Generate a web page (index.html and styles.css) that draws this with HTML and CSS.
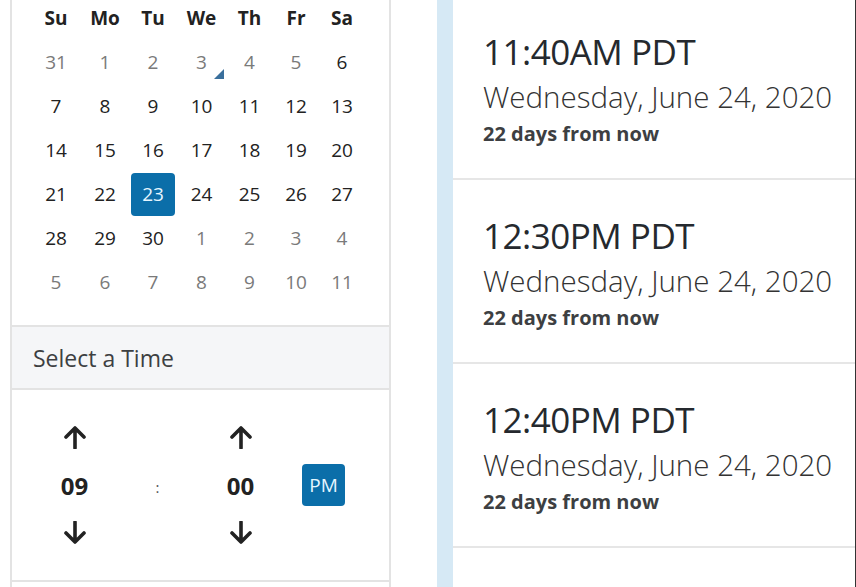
FILE: index.html
```html
<!DOCTYPE html>
<html>
<head>
<meta charset="utf-8">
<link rel="stylesheet" href="styles.css">
</head>
<body>
<div class="page">
  <div class="picker">
    <div class="cal">
      <div class="dow">Su</div><div class="dow">Mo</div><div class="dow">Tu</div><div class="dow">We</div><div class="dow">Th</div><div class="dow">Fr</div><div class="dow">Sa</div>
      <div class="d off">31</div><div class="d off">1</div><div class="d off">2</div><div class="d off today">3</div><div class="d off">4</div><div class="d off">5</div><div class="d">6</div>
      <div class="d">7</div><div class="d">8</div><div class="d">9</div><div class="d">10</div><div class="d">11</div><div class="d">12</div><div class="d">13</div>
      <div class="d">14</div><div class="d">15</div><div class="d">16</div><div class="d">17</div><div class="d">18</div><div class="d">19</div><div class="d">20</div>
      <div class="d">21</div><div class="d">22</div><div class="d"><span class="sel">23</span></div><div class="d">24</div><div class="d">25</div><div class="d">26</div><div class="d">27</div>
      <div class="d">28</div><div class="d">29</div><div class="d">30</div><div class="d off">1</div><div class="d off">2</div><div class="d off">3</div><div class="d off">4</div>
      <div class="d off">5</div><div class="d off">6</div><div class="d off">7</div><div class="d off">8</div><div class="d off">9</div><div class="d off">10</div><div class="d off">11</div>
    </div>
    <div class="time-head">Select a Time</div>
    <div class="time-body">
      <div class="tc"><svg class="arr" viewBox="0 0 24 24"><path d="M12 23V3M3 12L12 3L21 12"/></svg></div>
      <div class="tc"></div>
      <div class="tc"><svg class="arr" viewBox="0 0 24 24"><path d="M12 23V3M3 12L12 3L21 12"/></svg></div>
      <div class="tc"></div>
      <div class="tc num">09</div>
      <div class="tc colon">:</div>
      <div class="tc num">00</div>
      <div class="tc"><span class="pm">PM</span></div>
      <div class="tc"><svg class="arr" viewBox="0 0 24 24"><path d="M12 1V21M3 12L12 21L21 12"/></svg></div>
      <div class="tc"></div>
      <div class="tc"><svg class="arr" viewBox="0 0 24 24"><path d="M12 1V21M3 12L12 21L21 12"/></svg></div>
      <div class="tc"></div>
    </div>
    <div class="more"></div>
  </div>
  <div class="slots">
    <div class="slot">
      <div class="t">11:40AM PDT</div>
      <div class="date">Wednesday, June 24, 2020</div>
      <div class="rel">22 days from now</div>
    </div>
    <div class="slot">
      <div class="t">12:30PM PDT</div>
      <div class="date">Wednesday, June 24, 2020</div>
      <div class="rel">22 days from now</div>
    </div>
    <div class="slot">
      <div class="t">12:40PM PDT</div>
      <div class="date">Wednesday, June 24, 2020</div>
      <div class="rel">22 days from now</div>
    </div>
    <div class="slot"></div>
  </div>
</div>
</body>
</html>
```

FILE: styles.css
```css
html, body {
  margin: 0;
  padding: 0;
  background: #fff;
  overflow: hidden;
  height: 587px;
}
body {
  font-family: "Open Sans", "Noto Sans", sans-serif;
  color: #222;
}
.page {
  display: flex;
  align-items: flex-start;
  margin-top: -4px;
  padding-left: 10px;
}
.picker {
  width: 377px;
  border-left: 2px solid #e3e3e3;
  border-right: 2px solid #e3e3e3;
  flex: none;
}
.cal {
  display: grid;
  grid-template-columns: 50px 48px 48px 49px 47px 46px 46px;
  grid-auto-rows: 44px;
  padding: 0 24px 21px 19px;
  border-bottom: 2px solid #e3e3e3;
}
.dow {
  display: flex;
  align-items: center;
  justify-content: center;
  font-weight: 700;
  font-size: 19px;
  color: #222;
}
.d {
  display: flex;
  align-items: center;
  justify-content: center;
  font-size: 19px;
  color: #222;
  position: relative;
}
.d.off {
  color: #7a7a7a;
}
.d.today::after {
  content: "";
  position: absolute;
  right: 2px;
  bottom: 5px;
  border-left: 10px solid transparent;
  border-bottom: 10px solid #3a6f9c;
}
.sel {
  width: 44px;
  height: 43px;
  border-radius: 4px;
  background: #0b6ea9;
  color: #e6f6ff;
  display: flex;
  align-items: center;
  justify-content: center;
}
.time-head {
  height: 61px;
  background: #f5f6f8;
  border-bottom: 2px solid #e3e3e3;
  display: flex;
  align-items: center;
  padding-left: 21px;
  font-size: 23px;
  color: #3d3f42;
}
.time-body {
  display: grid;
  grid-template-columns: repeat(4, 83px);
  grid-auto-rows: 48px;
  padding: 23px 0 23px 21px;
  border-bottom: 2px solid #e3e3e3;
}
.tc {
  display: flex;
  align-items: center;
  justify-content: center;
}
.arr {
  width: 24px;
  height: 24px;
  fill: none;
  stroke: #222;
  stroke-width: 3.6;
  stroke-linecap: round;
  stroke-linejoin: round;
}
.num {
  font-weight: 700;
  font-size: 24px;
  color: #222;
}
.colon {
  font-size: 15px;
  color: #555;
  padding-top: 4px;
}
.pm {
  width: 43px;
  height: 42px;
  border-radius: 4px;
  background: #0b6ea9;
  color: #e6f6ff;
  font-size: 19px;
  display: flex;
  align-items: center;
  justify-content: center;
}
.more {
  height: 20px;
}
.slots {
  margin-left: 46px;
  flex: 1;
  border-left: 16px solid #d6e9f5;
  border-right: 1px solid #333;
  height: 800px;
}
.slot {
  height: 182px;
  border-bottom: 2px solid #e6e6e6;
  box-sizing: content-box;
  padding-left: 30px;
}
.slot .t {
  padding-top: 36px;
  font-size: 35px;
  letter-spacing: -0.5px;
  line-height: 40px;
  color: #25292e;
}
.slot .date {
  font-size: 29.5px;
  font-weight: 300;
  line-height: 50px;
  color: #333;
}
.slot .rel {
  font-size: 20px;
  font-weight: 700;
  line-height: 24px;
  color: #3d3f42;
}
```
